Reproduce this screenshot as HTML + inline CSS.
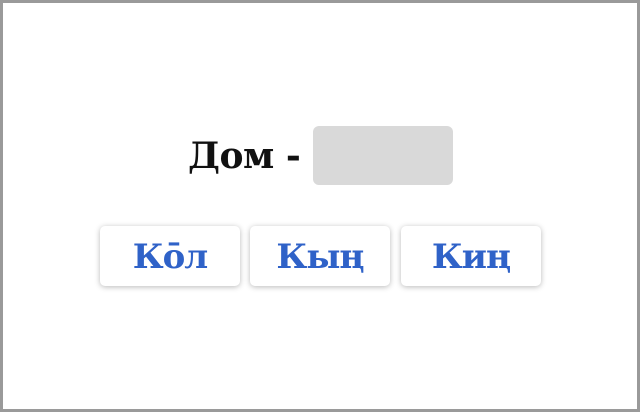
<!DOCTYPE html>
<html><head><meta charset="utf-8"><style>
html,body{margin:0;padding:0}
body{width:640px;height:412px;box-sizing:border-box;border:3px solid #9a9a9a;background:#fff;position:relative;overflow:hidden;font-family:"DejaVu Serif","Liberation Serif",serif;font-weight:bold}
.q{position:absolute;left:185px;top:131px;font-size:36px;color:#111;line-height:44px;letter-spacing:-0.5px}
.box{position:absolute;left:310px;top:123px;width:140px;height:59px;background:#d9d9d9;border-radius:6px}
.b{position:absolute;top:223px;width:140px;height:60px;background:#fff;border-radius:5px;box-shadow:0 1px 6px rgba(0,0,0,.28);color:#2f62c8;font-size:34px;text-align:center;line-height:62px;letter-spacing:-1px}
</style></head><body>
<div class="q">Дом -</div>
<div class="box"></div>
<div class="b" style="left:97px">Ко̄л</div>
<div class="b" style="left:247px">Кың</div>
<div class="b" style="left:398px">Киң</div>
</body></html>
